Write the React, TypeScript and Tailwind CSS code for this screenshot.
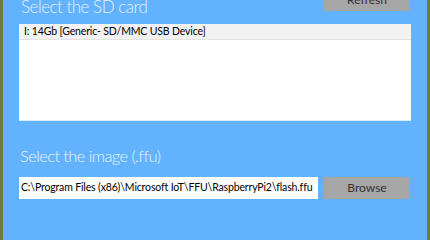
export default function App() {
  return (
    <div className="flex h-[240px] w-[430px] overflow-hidden font-['Lato',sans-serif]">
      <div className="w-[3px] bg-[#6d7a3e]" />
      <div className="flex flex-1 flex-col bg-[#63b2fe] px-4">
        <div className="flex h-[24px] items-start justify-between">
          <div className="-mt-[7px] pl-[2px] text-[17px] font-light leading-[28px] tracking-[-0.5px] text-[#e2f0ff]">
            Select the SD card
          </div>
          <div className="mr-[1px] h-[11px] w-[86px] overflow-hidden bg-[#a6a6a6]">
            <div className="-mt-[11px] flex h-[22px] items-center justify-center text-[12px] text-[#333]">
              Refresh
            </div>
          </div>
        </div>
        <div className="h-[97px] border-b border-[#d6ebff] bg-white">
          <div className="flex h-[16px] items-center border-b border-[#e3e3e3] bg-[#f2f2f2] pl-[5px] text-[10.5px] tracking-[-0.15px] text-black">
            I: 14Gb [Generic- SD/MMC USB Device]
          </div>
        </div>
        <div className="mt-[21px] pl-[1px] text-[16.5px] font-light leading-[28px] tracking-[-0.6px] text-[#e6f2ff]">
          Select the image (.ffu)
        </div>
        <div className="mt-[7px] flex h-[22px] gap-[6px]">
          <div className="flex w-[299px] items-center overflow-hidden whitespace-nowrap bg-white pl-[2px] text-[10.5px] tracking-[-0.15px] text-black">
            C:\Program Files (x86)\Microsoft IoT\FFU\RaspberryPi2\flash.ffu
          </div>
          <div className="flex w-[86px] items-center justify-center bg-[#a6a6a6] text-[12px] text-[#333]">
            Browse
          </div>
        </div>
      </div>
      <div className="w-[3px] bg-[#6d7a3e]" />
    </div>
  );
}
